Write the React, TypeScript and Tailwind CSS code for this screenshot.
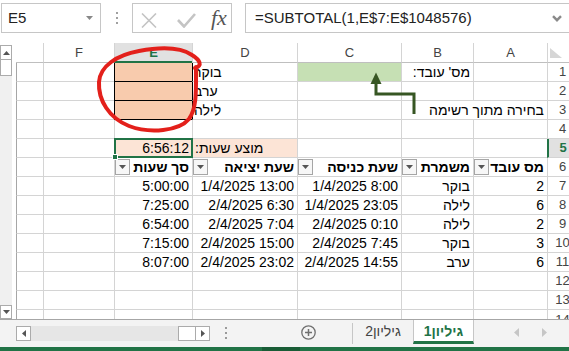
import type { ReactNode } from 'react';

/**
 * 表格单元格
 */
function Cell({
  children,
  className = '',
  line = 'border-[#d4d4d4]',
}: {
  children?: ReactNode;
  className?: string;
  line?: string;
}) {
  return (
    <div
      className={`flex min-w-0 items-center overflow-hidden whitespace-nowrap border-b border-l px-[3px] text-[14px] ${line} ${className}`}
    >
      {children}
    </div>
  );
}

function ColHead({ label, active = false }: { label: string; active?: boolean }) {
  if (active) {
    return (
      <div className="flex items-center justify-center border-l border-b-2 border-l-[#d4d4d4] border-b-[#217346] bg-[#e1e1e1] pt-px text-[13px] font-bold text-[#217346]">
        {label}
      </div>
    );
  }
  return (
    <div className="flex items-center justify-center border-b border-l border-b-[#bfbfbf] border-l-[#d4d4d4] text-[13px] text-[#444]">
      {label}
    </div>
  );
}

function RowHead({ n, active = false }: { n: number; active?: boolean }) {
  if (active) {
    return (
      <div className="flex items-center justify-center border-b border-l-2 border-b-[#d4d4d4] border-l-[#217346] bg-[#e1e1e1] text-[13px] font-bold text-[#217346]">
        {n}
      </div>
    );
  }
  return (
    <div className="flex items-center justify-center border-b border-l border-[#d4d4d4] text-[13px] text-[#444]">
      {n}
    </div>
  );
}

function FilterBtn() {
  return (
    <span className="flex h-[16px] w-[15px] shrink-0 items-center justify-center border border-[#a6a6a6] bg-[#f7f7f7]">
      <svg width="7" height="4" viewBox="0 0 7 4">
        <path d="M0 0h7L3.5 4z" fill="#555" />
      </svg>
    </span>
  );
}

function HeadCell({ label }: { label: string }) {
  return (
    <Cell className="justify-between pl-0 font-bold">
      <span>{label}</span>
      <FilterBtn />
    </Cell>
  );
}

const G_LINE = 'border-l-[#a6a6a6] border-b-[#d4d4d4]';

const data = [
  { n: 7, id: '2', shift: 'בוקר', start: '1/4/2025 8:00', end: '1/4/2025 13:00', total: '5:00:00' },
  { n: 8, id: '6', shift: 'לילה', start: '1/4/2025 23:05', end: '2/4/2025 6:30', total: '7:25:00' },
  { n: 9, id: '2', shift: 'לילה', start: '2/4/2025 0:10', end: '2/4/2025 7:04', total: '6:54:00' },
  { n: 10, id: '3', shift: 'בוקר', start: '2/4/2025 7:45', end: '2/4/2025 15:00', total: '7:15:00' },
  { n: 11, id: '6', shift: 'ערב', start: '2/4/2025 14:55', end: '2/4/2025 23:02', total: '8:07:00' },
];

function EmptyRow({ n }: { n: number }) {
  return (
    <>
      <RowHead n={n} />
      <Cell />
      <Cell />
      <Cell />
      <Cell />
      <Cell />
      <Cell />
      <Cell line={G_LINE} />
    </>
  );
}

function FormulaBar() {
  return (
    <div className="flex h-[43px] items-start pl-[1px] pt-[3px]">
      <div className="flex h-[30px] w-[100px] shrink-0 items-center justify-between border border-[#c6c6c6] pl-[6px] pr-[7px] text-[15px] text-[#222]">
        <span>E5</span>
        <svg width="7" height="4" viewBox="0 0 7 4">
          <path d="M0 0h7L3.5 4z" fill="#888" />
        </svg>
      </div>
      <div className="flex w-[31px] shrink-0 flex-col items-center gap-[3px] pt-[9px]">
        <span className="h-[2px] w-[2px] bg-[#a0a0a0]" />
        <span className="h-[2px] w-[2px] bg-[#a0a0a0]" />
        <span className="h-[2px] w-[2px] bg-[#a0a0a0]" />
      </div>
      <div className="flex h-[30px] w-[100px] shrink-0 items-center border border-[#c6c6c6] pl-[8px] pt-[4px]">
        <svg width="16" height="15" viewBox="0 0 16 15">
          <path d="M1 0.5L15 14.5M15 0.5L1 14.5" stroke="#c4c4c4" strokeWidth="1.6" />
        </svg>
        <svg className="ml-[20px]" width="19" height="15" viewBox="0 0 19 15">
          <path d="M1 7L7 13.5L18 1" fill="none" stroke="#c4c4c4" strokeWidth="2.6" />
        </svg>
        <span className="ml-[15px] -mt-[4px] font-['Liberation_Serif',serif] text-[22px] italic leading-none text-[#555]">
          fx
        </span>
      </div>
      <div className="ml-[13px] flex h-[30px] flex-1 items-center justify-between border-y border-l border-[#c6c6c6] pl-[9px] pr-[7px] text-[15px] text-[#222]">
        <span>=SUBTOTAL(1,E$7:E$1048576)</span>
        <svg width="10" height="7" viewBox="0 0 10 7">
          <path d="M1 1.2L5 5.2L9 1.2" fill="none" stroke="#8a8a8a" strokeWidth="2.4" />
        </svg>
      </div>
    </div>
  );
}

function VScroll() {
  return (
    <div className="flex w-[16px] shrink-0 flex-col pr-[4px] pt-[2px]">
      <div className="flex h-[15px] items-center justify-center border border-[#ababab] bg-white">
        <svg width="7" height="4" viewBox="0 0 7 4">
          <path d="M0 4h7L3.5 0z" fill="#555" />
        </svg>
      </div>
      <div className="h-[16px] border-x border-b border-[#ababab] bg-white" />
      <div className="flex-1 bg-[#f0f0f0]" />
      <div className="flex h-[14px] items-center justify-center border border-[#ababab] bg-white">
        <svg width="7" height="4" viewBox="0 0 7 4">
          <path d="M0 0h7L3.5 4z" fill="#555" />
        </svg>
      </div>
    </div>
  );
}

function Sheet() {
  return (
    <div
      dir="rtl"
      className="grid w-[561px] shrink-0 grid-cols-[30px_74px_72px_104px_105px_78px_71px_27px] grid-rows-[20px_repeat(13,19px)_9px] text-black"
    >
      {/* 列标题 */}
      <div className="flex items-end justify-end border-b border-l border-b-[#bfbfbf] border-l-[#d4d4d4] pb-[4px] pl-[2px]">
        <svg width="12" height="10" viewBox="0 0 12 10">
          <path d="M0 0V10H12Z" fill="#d6d6d6" />
        </svg>
      </div>
      <ColHead label="A" />
      <ColHead label="B" />
      <ColHead label="C" />
      <ColHead label="D" />
      <ColHead label="E" active />
      <ColHead label="F" />
      <div className="border-b border-[#bfbfbf]" />

      {/* 1 */}
      <RowHead n={1} />
      <Cell />
      <Cell>
        <span>מס' עובד:</span>
      </Cell>
      <Cell className="bg-[#c6e0b4]" />
      <Cell className="justify-end pl-[1px]" line="border-l-black border-b-[#d4d4d4]">
        בוקר
      </Cell>
      <Cell className="bg-[#f8cbad]" line="border-black" />
      <Cell />
      <Cell line={G_LINE} />

      {/* 2 */}
      <RowHead n={2} />
      <Cell />
      <Cell />
      <Cell />
      <Cell className="justify-end pl-[1px]" line="border-l-black border-b-[#d4d4d4]">
        ערב
      </Cell>
      <Cell className="bg-[#f8cbad]" line="border-black" />
      <Cell />
      <Cell line={G_LINE} />

      {/* 3 */}
      <RowHead n={3} />
      <div className="flex items-center whitespace-nowrap border-b border-[#d4d4d4] px-[3px] text-[14px]">
        בחירה מתוך רשימה
      </div>
      <Cell />
      <Cell />
      <Cell className="justify-end pl-[1px]" line="border-l-black border-b-[#d4d4d4]">
        לילה
      </Cell>
      <Cell className="bg-[#f8cbad]" line="border-black" />
      <Cell />
      <Cell line={G_LINE} />

      <EmptyRow n={4} />

      {/* 5 */}
      <RowHead n={5} active />
      <Cell />
      <Cell />
      <Cell />
      <Cell className="justify-end bg-[#fce4d6] pl-[2px]">מוצע שעות:</Cell>
      <div className="relative z-10 flex items-center border-b border-l border-[#d4d4d4] bg-[#fce4d6] px-[3px] text-[14px]">
        <span dir="ltr">6:56:12</span>
        <div className="pointer-events-none absolute bottom-[-1px] left-[-1px] right-[-1px] top-[-1px] border-2 border-[#217346]" />
        <div className="absolute bottom-[-3px] left-[-3px] h-[6px] w-[6px] border border-white bg-[#217346]" />
      </div>
      <Cell />
      <Cell line={G_LINE} />

      {/* 6 */}
      <RowHead n={6} />
      <HeadCell label="מס עובד" />
      <HeadCell label="משמרת" />
      <HeadCell label="שעת כניסה" />
      <HeadCell label="שעת יציאה" />
      <HeadCell label="סך שעות" />
      <Cell />
      <Cell line={G_LINE} />

      {data.map((r) => (
        <div key={r.n} className="contents">
          <RowHead n={r.n} />
          <Cell>
            <span dir="ltr">{r.id}</span>
          </Cell>
          <Cell>{r.shift}</Cell>
          <Cell>
            <span dir="ltr">{r.start}</span>
          </Cell>
          <Cell className="pl-0">
            <span dir="ltr">{r.end}</span>
          </Cell>
          <Cell>
            <span dir="ltr">{r.total}</span>
          </Cell>
          <Cell />
          <Cell line={G_LINE} />
        </div>
      ))}

      <EmptyRow n={12} />
      <EmptyRow n={13} />

      {/* 14 (partial) */}
      <div className="flex items-start justify-center overflow-hidden border-l border-[#d4d4d4] text-[13px] leading-[19px] text-[#444]">
        14
      </div>
      <div className="border-l border-[#d4d4d4]" />
      <div className="border-l border-[#d4d4d4]" />
      <div className="border-l border-[#d4d4d4]" />
      <div className="border-l border-[#d4d4d4]" />
      <div className="border-l border-[#d4d4d4]" />
      <div className="border-l border-[#d4d4d4]" />
      <div className="border-l border-[#a6a6a6]" />
    </div>
  );
}

function SheetTabs() {
  return (
    <div className="flex h-[28px] border-t border-[#a6a6a6] bg-[#f3f3f3]">
      <div className="w-[16px] shrink-0" />
      <div className="w-[194px] shrink-0 pt-[6px]">
        <div className="flex h-[15px]">
          <div className="flex w-[15px] items-center justify-center border border-[#ababab] bg-white">
            <svg width="4" height="7" viewBox="0 0 4 7">
              <path d="M4 0v7L0 3.5z" fill="#555" />
            </svg>
          </div>
          <div className="flex-1 bg-[#e6e6e6]" />
          <div className="w-[17px] border-y border-l border-[#ababab] bg-white" />
          <div className="flex w-[15px] items-center justify-center border border-[#ababab] bg-white">
            <svg width="4" height="7" viewBox="0 0 4 7">
              <path d="M0 0v7L4 3.5z" fill="#555" />
            </svg>
          </div>
        </div>
      </div>
      <div className="flex w-[32px] shrink-0 flex-col items-center gap-[3px] pt-[7px]">
        <span className="h-[2px] w-[2px] bg-[#9a9a9a]" />
        <span className="h-[2px] w-[2px] bg-[#9a9a9a]" />
        <span className="h-[2px] w-[2px] bg-[#9a9a9a]" />
      </div>
      <div className="flex w-[110px] shrink-0 items-start pl-[59px] pt-[5px]">
        <svg width="15" height="15" viewBox="0 0 15 15">
          <circle cx="7.5" cy="7.5" r="6.7" fill="none" stroke="#6f6f6f" strokeWidth="1.3" />
          <path d="M7.5 4v7M4 7.5h7" stroke="#6f6f6f" strokeWidth="1.5" />
        </svg>
      </div>
      <div className="my-[3px] w-px shrink-0 bg-[#c6c6c6]" />
      <div
        dir="rtl"
        className="flex w-[60px] shrink-0 items-center justify-center pb-[4px] text-[14px] text-[#444]"
      >
        גיליון2
      </div>
      <div
        dir="rtl"
        className="flex h-[24px] w-[61px] shrink-0 items-center justify-center border-x border-b-[3px] border-x-[#c6c6c6] border-b-[#217346] bg-white pt-px text-[14px] font-bold text-[#217346]"
      >
        גיליון1
      </div>
      <div className="flex flex-1 items-start gap-[23px] pl-[40px] pt-[8px]">
        <svg width="5" height="9" viewBox="0 0 5 9">
          <path d="M5 0v9L0 4.5z" fill="#c6c6c6" />
        </svg>
        <svg width="5" height="9" viewBox="0 0 5 9">
          <path d="M0 0v9L5 4.5z" fill="#c6c6c6" />
        </svg>
      </div>
    </div>
  );
}

function Annotations() {
  return (
    <svg
      className="pointer-events-none absolute left-0 top-0"
      width="569"
      height="351"
      viewBox="0 0 569 351"
    >
      <path
        d="M196 67 C196 90 197 108 189 119 C179 131 150 134 129 126 C109 118 98 100 99 82 C100 66 117 55 139 51 C160 47 180 47 192 55 C200 60 203 66 195 68"
        fill="none"
        stroke="#e3201b"
        strokeWidth="4"
        strokeLinecap="round"
      />
      <path d="M414 114 V94 H376 V83" fill="none" stroke="#375623" strokeWidth="3" />
      <path d="M370.5 84 H381.5 L376 72.5 Z" fill="#375623" />
    </svg>
  );
}

export default function App() {
  return (
    <div className="relative h-[351px] w-[569px] overflow-hidden bg-white font-['Liberation_Sans','DejaVu_Sans',sans-serif] text-black">
      <FormulaBar />
      <div className="flex h-[276px]">
        <VScroll />
        <Sheet />
      </div>
      <SheetTabs />
      <div className="flex h-[4px] bg-[#217346]">
        <div className="w-[262px]" />
        <div className="w-[38px] bg-[#195c36]" />
      </div>
      <Annotations />
    </div>
  );
}
